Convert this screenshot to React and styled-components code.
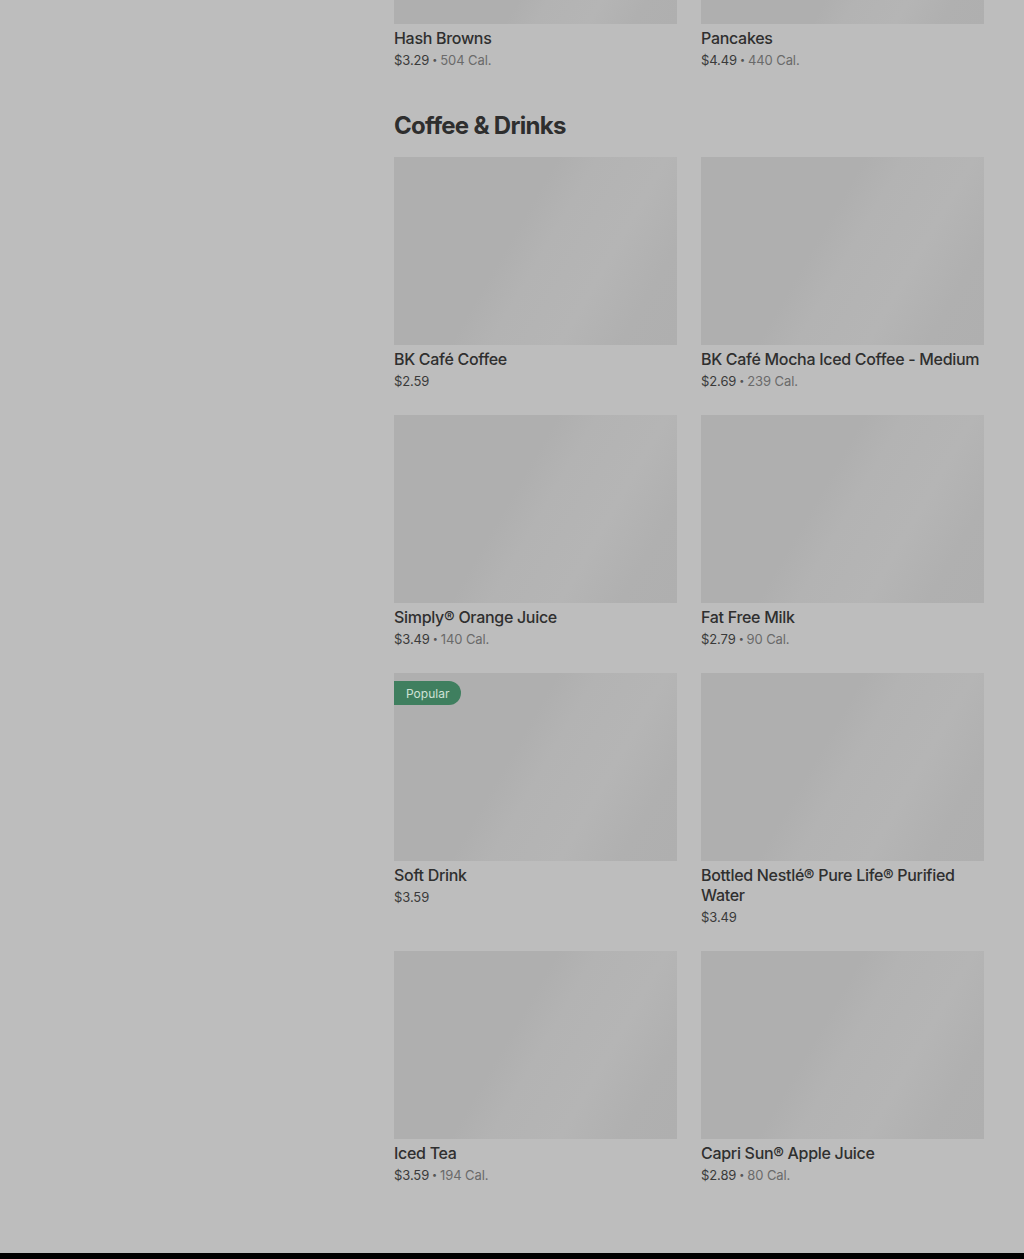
import React from 'react';
import styled, { createGlobalStyle } from 'styled-components';

const GlobalStyle = createGlobalStyle`
  * {
    margin: 0;
    padding: 0;
    box-sizing: border-box;
  }
  body {
    background: #bdbdbd;
    font-family: Inter, "Liberation Sans", sans-serif;
    color: #2f2f2f;
  }
`;

const Page = styled.div`
  display: grid;
  grid-template-columns: 314px 590px;
  column-gap: 40px;
  padding: 0 40px 68px 40px;
  background: #bdbdbd;
`;

const Sidebar = styled.aside``;

const Main = styled.main`
  display: flex;
  flex-direction: column;
`;

const Section = styled.section`
  display: flex;
  flex-direction: column;
`;

const SectionTitle = styled.h2`
  font-size: 24px;
  line-height: 32px;
  font-weight: 700;
  letter-spacing: -0.7px;
  color: #2e2e2e;
  margin: 40px 0 15px;
`;

const Grid = styled.div`
  display: grid;
  grid-template-columns: 283px 283px;
  column-gap: 24px;
  row-gap: 24px;
`;

const Card = styled.div`
  display: flex;
  flex-direction: column;
  position: relative;
`;

const Thumb = styled.div`
  height: ${p => p.$h || 188}px;
  background: linear-gradient(
    120deg,
    #afafaf 0%,
    #afafaf 42%,
    #b3b3b3 52%,
    #b5b5b5 70%,
    #b0b0b0 85%,
    #afafaf 100%
  );
`;

const Badge = styled.span`
  position: absolute;
  top: 8px;
  left: 0;
  height: 24px;
  padding: 0 12px;
  display: flex;
  align-items: center;
  background: #3f7f5f;
  color: #cfe2d6;
  font-size: 12px;
  border-radius: 0 12px 12px 0;
`;

const ItemName = styled.div`
  margin-top: 4px;
  font-size: 16px;
  line-height: 20px;
  font-weight: 500;
  color: #2f2f2f;
  letter-spacing: -0.3px;
`;

const Meta = styled.div`
  margin-top: 2px;
  font-size: 13px;
  line-height: 20px;
  color: #3a3a3a;
  display: flex;
  align-items: center;
  gap: 3px;
  letter-spacing: -0.1px;
`;

const Cal = styled.span`
  color: #6a6a6a;
`;

const Dot = styled.span`
  color: #555;
  font-size: 9px;
`;

const Footer = styled.footer`
  height: 6px;
  background: #000;
`;

const Item = ({ name, price, cal, popular, h }) => (
  <Card>
    <Thumb $h={h} />
    {popular && <Badge>Popular</Badge>}
    <ItemName>{name}</ItemName>
    <Meta>
      <span>{price}</span>
      {cal && (
        <>
          <Dot>•</Dot>
          <Cal>{cal}</Cal>
        </>
      )}
    </Meta>
  </Card>
);

const drinks = [
  { name: 'BK Café Coffee', price: '$2.59' },
  { name: 'BK Café Mocha Iced Coffee - Medium', price: '$2.69', cal: '239 Cal.' },
  { name: 'Simply® Orange Juice', price: '$3.49', cal: '140 Cal.' },
  { name: 'Fat Free Milk', price: '$2.79', cal: '90 Cal.' },
  { name: 'Soft Drink', price: '$3.59', popular: true },
  { name: 'Bottled Nestlé® Pure Life® Purified Water', price: '$3.49' },
  { name: 'Iced Tea', price: '$3.59', cal: '194 Cal.' },
  { name: 'Capri Sun® Apple Juice', price: '$2.89', cal: '80 Cal.' },
];

export default function App() {
  return (
    <>
      <GlobalStyle />
      <Page>
        <Sidebar />
        <Main>
          <Section>
            <Grid>
              <Item h={24} name="Hash Browns" price="$3.29" cal="504 Cal." />
              <Item h={24} name="Pancakes" price="$4.49" cal="440 Cal." />
            </Grid>
          </Section>
          <Section>
            <SectionTitle>Coffee &amp; Drinks</SectionTitle>
            <Grid>
              {drinks.map(d => (
                <Item key={d.name} {...d} />
              ))}
            </Grid>
          </Section>
        </Main>
      </Page>
      <Footer />
    </>
  );
}
